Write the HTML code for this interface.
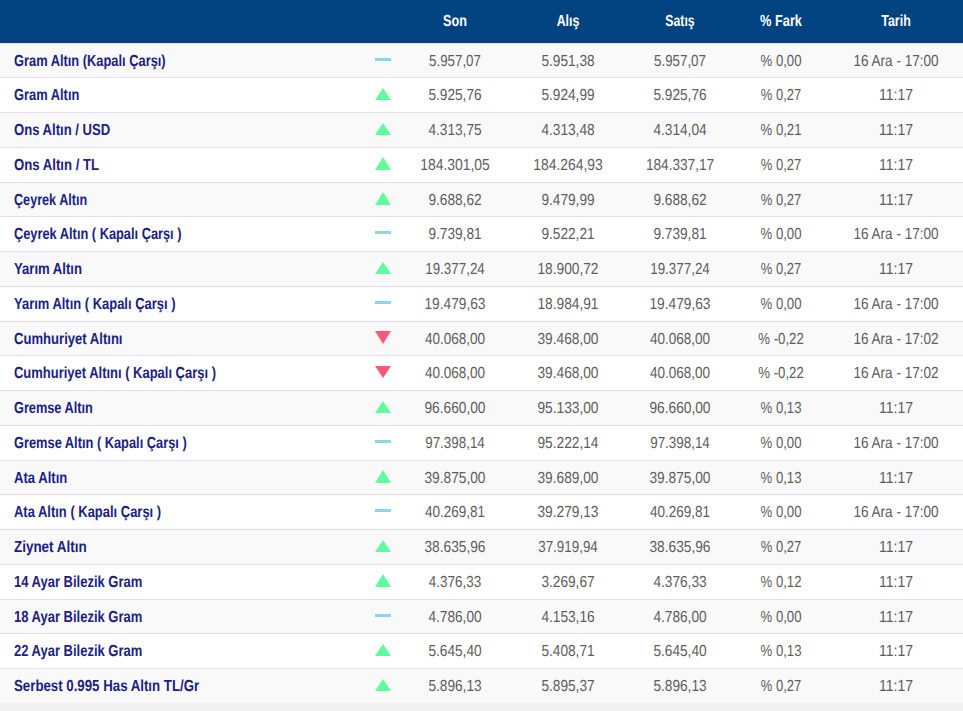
<!DOCTYPE html>
<html lang="tr"><head><meta charset="utf-8"><title>Altın Fiyatları</title>
<style>
html,body{margin:0;padding:0}
body{width:963px;height:711px;overflow:hidden;background:#f1f1f1;font-family:"Liberation Sans",sans-serif;position:relative}
.hd{position:absolute;left:0;top:0;width:963px;height:43px;background:#014280}
.r{position:absolute;left:0;width:963px}
.g{background:#f9f9f9}
.w{background:#fff}
.b{position:absolute;left:0;width:963px;height:1px;background:#dfe3e7}
.t{position:absolute;white-space:nowrap;text-rendering:geometricPrecision;line-height:20px;height:20px}
.n{left:14px;color:#1b2184;font-weight:bold;font-size:16px;transform-origin:0 15px}
.v{color:#5d5d5d;font-size:16px;transform-origin:50% 15px}
.h{color:#fff;font-weight:bold;font-size:16px;transform-origin:50% 15px}
.c{position:absolute;width:0;height:20px}
.c .t{left:0}
svg{position:absolute;display:block}
</style></head>
<body>
<div class="hd"></div>
<div class="b" style="top:43px"></div>
<div class="c" style="left:455.0px;top:12.00px"><span id="h_son" class="t h" style="transform:translateX(-50%) scale(0.7867,1)">Son</span></div>
<div class="c" style="left:568.0px;top:12.00px"><span id="h_alis" class="t h" style="transform:translateX(-50%) scale(0.7733,1)">Alış</span></div>
<div class="c" style="left:680.2px;top:12.00px"><span id="h_satis" class="t h" style="transform:translateX(-50%) scale(0.7667,1)">Satış</span></div>
<div class="c" style="left:781.3px;top:12.00px"><span id="h_fark" class="t h" style="transform:translateX(-50%) scale(0.8000,1)">% Fark</span></div>
<div class="c" style="left:895.9px;top:12.00px"><span id="h_tarih" class="t h" style="transform:translateX(-50%) scale(0.7769,1)">Tarih</span></div>
<div class="r g" style="top:44px;height:33px"></div>
<div class="b" style="top:77px"></div>
<span id="n0" class="t n" style="top:52.00px;transform:scale(0.8032,1)">Gram Altın (Kapalı Çarşı)</span>
<svg style="left:375px;top:58px" width="16" height="3" viewBox="0 0 16 3"><rect width="16" height="3" fill="#88d9e2"/></svg>
<div class="c" style="left:455.0px;top:52.00px"><span id="son0" class="t v" style="transform:translateX(-50%) scale(0.8323,1)">5.957,07</span></div>
<div class="c" style="left:568.0px;top:52.00px"><span id="alis0" class="t v" style="transform:translateX(-50%) scale(0.8548,1)">5.951,38</span></div>
<div class="c" style="left:680.2px;top:52.00px"><span id="satis0" class="t v" style="transform:translateX(-50%) scale(0.8323,1)">5.957,07</span></div>
<div class="c" style="left:781.3px;top:52.00px"><span id="fark0" class="t v" style="transform:translateX(-50%) scale(0.8200,1)">% 0,00</span></div>
<div class="c" style="left:895.9px;top:52.00px"><span id="tarih0" class="t v" style="transform:translateX(-50%) scale(0.8470,1)">16 Ara - 17:00</span></div>
<div class="r w" style="top:78px;height:34px"></div>
<div class="b" style="top:112px"></div>
<span id="n1" class="t n" style="top:86.00px;transform:scale(0.8049,1)">Gram Altın</span>
<svg style="left:375px;top:88px" width="16" height="12" viewBox="0 0 16 12"><path d="M8 0L16 12H0Z" fill="#5efc9f"/></svg>
<div class="c" style="left:455.0px;top:86.00px"><span id="son1" class="t v" style="transform:translateX(-50%) scale(0.8548,1)">5.925,76</span></div>
<div class="c" style="left:568.0px;top:86.00px"><span id="alis1" class="t v" style="transform:translateX(-50%) scale(0.8548,1)">5.924,99</span></div>
<div class="c" style="left:680.2px;top:86.00px"><span id="satis1" class="t v" style="transform:translateX(-50%) scale(0.8548,1)">5.925,76</span></div>
<div class="c" style="left:781.3px;top:86.00px"><span id="fark1" class="t v" style="transform:translateX(-50%) scale(0.8100,1)">% 0,27</span></div>
<div class="c" style="left:895.9px;top:86.00px"><span id="tarih1" class="t v" style="transform:translateX(-50%) scale(0.8737,1)">11:17</span></div>
<div class="r g" style="top:113px;height:34px"></div>
<div class="b" style="top:147px"></div>
<span id="n2" class="t n" style="top:121.00px;transform:scale(0.8178,1)">Ons Altın / USD</span>
<svg style="left:375px;top:123px" width="16" height="12" viewBox="0 0 16 12"><path d="M8 0L16 12H0Z" fill="#5efc9f"/></svg>
<div class="c" style="left:455.0px;top:121.00px"><span id="son2" class="t v" style="transform:translateX(-50%) scale(0.8548,1)">4.313,75</span></div>
<div class="c" style="left:568.0px;top:121.00px"><span id="alis2" class="t v" style="transform:translateX(-50%) scale(0.8548,1)">4.313,48</span></div>
<div class="c" style="left:680.2px;top:121.00px"><span id="satis2" class="t v" style="transform:translateX(-50%) scale(0.8548,1)">4.314,04</span></div>
<div class="c" style="left:781.3px;top:121.00px"><span id="fark2" class="t v" style="transform:translateX(-50%) scale(0.8200,1)">% 0,21</span></div>
<div class="c" style="left:895.9px;top:121.00px"><span id="tarih2" class="t v" style="transform:translateX(-50%) scale(0.8737,1)">11:17</span></div>
<div class="r w" style="top:148px;height:34px"></div>
<div class="b" style="top:182px"></div>
<span id="n3" class="t n" style="top:156.00px;transform:scale(0.8221,1)">Ons Altın / TL</span>
<svg style="left:375px;top:157px" width="16" height="13" viewBox="0 0 16 13"><path d="M8 0L16 13H0Z" fill="#5efc9f"/></svg>
<div class="c" style="left:455.0px;top:156.00px"><span id="son3" class="t v" style="transform:translateX(-50%) scale(0.8696,1)">184.301,05</span></div>
<div class="c" style="left:568.0px;top:156.00px"><span id="alis3" class="t v" style="transform:translateX(-50%) scale(0.8696,1)">184.264,93</span></div>
<div class="c" style="left:680.2px;top:156.00px"><span id="satis3" class="t v" style="transform:translateX(-50%) scale(0.8519,1)">184.337,17</span></div>
<div class="c" style="left:781.3px;top:156.00px"><span id="fark3" class="t v" style="transform:translateX(-50%) scale(0.8100,1)">% 0,27</span></div>
<div class="c" style="left:895.9px;top:156.00px"><span id="tarih3" class="t v" style="transform:translateX(-50%) scale(0.8737,1)">11:17</span></div>
<div class="r g" style="top:183px;height:33px"></div>
<div class="b" style="top:216px"></div>
<span id="n4" class="t n" style="top:191.00px;transform:scale(0.7892,1)">Çeyrek Altın</span>
<svg style="left:375px;top:192px" width="16" height="13" viewBox="0 0 16 13"><path d="M8 0L16 13H0Z" fill="#5efc9f"/></svg>
<div class="c" style="left:455.0px;top:191.00px"><span id="son4" class="t v" style="transform:translateX(-50%) scale(0.8548,1)">9.688,62</span></div>
<div class="c" style="left:568.0px;top:191.00px"><span id="alis4" class="t v" style="transform:translateX(-50%) scale(0.8548,1)">9.479,99</span></div>
<div class="c" style="left:680.2px;top:191.00px"><span id="satis4" class="t v" style="transform:translateX(-50%) scale(0.8548,1)">9.688,62</span></div>
<div class="c" style="left:781.3px;top:191.00px"><span id="fark4" class="t v" style="transform:translateX(-50%) scale(0.8100,1)">% 0,27</span></div>
<div class="c" style="left:895.9px;top:191.00px"><span id="tarih4" class="t v" style="transform:translateX(-50%) scale(0.8737,1)">11:17</span></div>
<div class="r w" style="top:217px;height:34px"></div>
<div class="b" style="top:251px"></div>
<span id="n5" class="t n" style="top:225.00px;transform:scale(0.8005,1)">Çeyrek Altın ( Kapalı Çarşı )</span>
<svg style="left:375px;top:231px" width="16" height="3" viewBox="0 0 16 3"><rect width="16" height="3" fill="#88d9e2"/></svg>
<div class="c" style="left:455.0px;top:225.00px"><span id="son5" class="t v" style="transform:translateX(-50%) scale(0.8548,1)">9.739,81</span></div>
<div class="c" style="left:568.0px;top:225.00px"><span id="alis5" class="t v" style="transform:translateX(-50%) scale(0.8548,1)">9.522,21</span></div>
<div class="c" style="left:680.2px;top:225.00px"><span id="satis5" class="t v" style="transform:translateX(-50%) scale(0.8548,1)">9.739,81</span></div>
<div class="c" style="left:781.3px;top:225.00px"><span id="fark5" class="t v" style="transform:translateX(-50%) scale(0.8200,1)">% 0,00</span></div>
<div class="c" style="left:895.9px;top:225.00px"><span id="tarih5" class="t v" style="transform:translateX(-50%) scale(0.8470,1)">16 Ara - 17:00</span></div>
<div class="r g" style="top:252px;height:34px"></div>
<div class="b" style="top:286px"></div>
<span id="n6" class="t n" style="top:260.00px;transform:scale(0.8193,1)">Yarım Altın</span>
<svg style="left:375px;top:262px" width="16" height="12" viewBox="0 0 16 12"><path d="M8 0L16 12H0Z" fill="#5efc9f"/></svg>
<div class="c" style="left:455.0px;top:260.00px"><span id="son6" class="t v" style="transform:translateX(-50%) scale(0.8373,1)">19.377,24</span></div>
<div class="c" style="left:568.0px;top:260.00px"><span id="alis6" class="t v" style="transform:translateX(-50%) scale(0.8570,1)">18.900,72</span></div>
<div class="c" style="left:680.2px;top:260.00px"><span id="satis6" class="t v" style="transform:translateX(-50%) scale(0.8373,1)">19.377,24</span></div>
<div class="c" style="left:781.3px;top:260.00px"><span id="fark6" class="t v" style="transform:translateX(-50%) scale(0.8100,1)">% 0,27</span></div>
<div class="c" style="left:895.9px;top:260.00px"><span id="tarih6" class="t v" style="transform:translateX(-50%) scale(0.8737,1)">11:17</span></div>
<div class="r w" style="top:287px;height:34px"></div>
<div class="b" style="top:321px"></div>
<span id="n7" class="t n" style="top:295.00px;transform:scale(0.8095,1)">Yarım Altın ( Kapalı Çarşı )</span>
<svg style="left:375px;top:301px" width="16" height="3" viewBox="0 0 16 3"><rect width="16" height="3" fill="#88d9e2"/></svg>
<div class="c" style="left:455.0px;top:295.00px"><span id="son7" class="t v" style="transform:translateX(-50%) scale(0.8570,1)">19.479,63</span></div>
<div class="c" style="left:568.0px;top:295.00px"><span id="alis7" class="t v" style="transform:translateX(-50%) scale(0.8570,1)">18.984,91</span></div>
<div class="c" style="left:680.2px;top:295.00px"><span id="satis7" class="t v" style="transform:translateX(-50%) scale(0.8570,1)">19.479,63</span></div>
<div class="c" style="left:781.3px;top:295.00px"><span id="fark7" class="t v" style="transform:translateX(-50%) scale(0.8200,1)">% 0,00</span></div>
<div class="c" style="left:895.9px;top:295.00px"><span id="tarih7" class="t v" style="transform:translateX(-50%) scale(0.8470,1)">16 Ara - 17:00</span></div>
<div class="r g" style="top:322px;height:33px"></div>
<div class="b" style="top:355px"></div>
<span id="n8" class="t n" style="top:330.00px;transform:scale(0.8174,1)">Cumhuriyet Altını</span>
<svg style="left:375px;top:331px" width="16" height="13" viewBox="0 0 16 13"><path d="M0 0H16L8 13Z" fill="#ff5777"/></svg>
<div class="c" style="left:455.0px;top:330.00px"><span id="son8" class="t v" style="transform:translateX(-50%) scale(0.8451,1)">40.068,00</span></div>
<div class="c" style="left:568.0px;top:330.00px"><span id="alis8" class="t v" style="transform:translateX(-50%) scale(0.8570,1)">39.468,00</span></div>
<div class="c" style="left:680.2px;top:330.00px"><span id="satis8" class="t v" style="transform:translateX(-50%) scale(0.8451,1)">40.068,00</span></div>
<div class="c" style="left:781.3px;top:330.00px"><span id="fark8" class="t v" style="transform:translateX(-50%) scale(0.8236,1)">% -0,22</span></div>
<div class="c" style="left:895.9px;top:330.00px"><span id="tarih8" class="t v" style="transform:translateX(-50%) scale(0.8470,1)">16 Ara - 17:02</span></div>
<div class="r w" style="top:356px;height:34px"></div>
<div class="b" style="top:390px"></div>
<span id="n9" class="t n" style="top:364.00px;transform:scale(0.8104,1)">Cumhuriyet Altını ( Kapalı Çarşı )</span>
<svg style="left:375px;top:366px" width="16" height="12" viewBox="0 0 16 12"><path d="M0 0H16L8 12Z" fill="#ff5777"/></svg>
<div class="c" style="left:455.0px;top:364.00px"><span id="son9" class="t v" style="transform:translateX(-50%) scale(0.8451,1)">40.068,00</span></div>
<div class="c" style="left:568.0px;top:364.00px"><span id="alis9" class="t v" style="transform:translateX(-50%) scale(0.8570,1)">39.468,00</span></div>
<div class="c" style="left:680.2px;top:364.00px"><span id="satis9" class="t v" style="transform:translateX(-50%) scale(0.8451,1)">40.068,00</span></div>
<div class="c" style="left:781.3px;top:364.00px"><span id="fark9" class="t v" style="transform:translateX(-50%) scale(0.8236,1)">% -0,22</span></div>
<div class="c" style="left:895.9px;top:364.00px"><span id="tarih9" class="t v" style="transform:translateX(-50%) scale(0.8470,1)">16 Ara - 17:02</span></div>
<div class="r g" style="top:391px;height:34px"></div>
<div class="b" style="top:425px"></div>
<span id="n10" class="t n" style="top:399.00px;transform:scale(0.7960,1)">Gremse Altın</span>
<svg style="left:375px;top:401px" width="16" height="12" viewBox="0 0 16 12"><path d="M8 0L16 12H0Z" fill="#5efc9f"/></svg>
<div class="c" style="left:455.0px;top:399.00px"><span id="son10" class="t v" style="transform:translateX(-50%) scale(0.8570,1)">96.660,00</span></div>
<div class="c" style="left:568.0px;top:399.00px"><span id="alis10" class="t v" style="transform:translateX(-50%) scale(0.8570,1)">95.133,00</span></div>
<div class="c" style="left:680.2px;top:399.00px"><span id="satis10" class="t v" style="transform:translateX(-50%) scale(0.8570,1)">96.660,00</span></div>
<div class="c" style="left:781.3px;top:399.00px"><span id="fark10" class="t v" style="transform:translateX(-50%) scale(0.8200,1)">% 0,13</span></div>
<div class="c" style="left:895.9px;top:399.00px"><span id="tarih10" class="t v" style="transform:translateX(-50%) scale(0.8737,1)">11:17</span></div>
<div class="r w" style="top:426px;height:34px"></div>
<div class="b" style="top:460px"></div>
<span id="n11" class="t n" style="top:434.00px;transform:scale(0.8014,1)">Gremse Altın ( Kapalı Çarşı )</span>
<svg style="left:375px;top:440px" width="16" height="3" viewBox="0 0 16 3"><rect width="16" height="3" fill="#88d9e2"/></svg>
<div class="c" style="left:455.0px;top:434.00px"><span id="son11" class="t v" style="transform:translateX(-50%) scale(0.8373,1)">97.398,14</span></div>
<div class="c" style="left:568.0px;top:434.00px"><span id="alis11" class="t v" style="transform:translateX(-50%) scale(0.8570,1)">95.222,14</span></div>
<div class="c" style="left:680.2px;top:434.00px"><span id="satis11" class="t v" style="transform:translateX(-50%) scale(0.8373,1)">97.398,14</span></div>
<div class="c" style="left:781.3px;top:434.00px"><span id="fark11" class="t v" style="transform:translateX(-50%) scale(0.8200,1)">% 0,00</span></div>
<div class="c" style="left:895.9px;top:434.00px"><span id="tarih11" class="t v" style="transform:translateX(-50%) scale(0.8470,1)">16 Ara - 17:00</span></div>
<div class="r g" style="top:461px;height:33px"></div>
<div class="b" style="top:494px"></div>
<span id="n12" class="t n" style="top:469.00px;transform:scale(0.8169,1)">Ata Altın</span>
<svg style="left:375px;top:470px" width="16" height="13" viewBox="0 0 16 13"><path d="M8 0L16 13H0Z" fill="#5efc9f"/></svg>
<div class="c" style="left:455.0px;top:469.00px"><span id="son12" class="t v" style="transform:translateX(-50%) scale(0.8570,1)">39.875,00</span></div>
<div class="c" style="left:568.0px;top:469.00px"><span id="alis12" class="t v" style="transform:translateX(-50%) scale(0.8570,1)">39.689,00</span></div>
<div class="c" style="left:680.2px;top:469.00px"><span id="satis12" class="t v" style="transform:translateX(-50%) scale(0.8570,1)">39.875,00</span></div>
<div class="c" style="left:781.3px;top:469.00px"><span id="fark12" class="t v" style="transform:translateX(-50%) scale(0.8200,1)">% 0,13</span></div>
<div class="c" style="left:895.9px;top:469.00px"><span id="tarih12" class="t v" style="transform:translateX(-50%) scale(0.8737,1)">11:17</span></div>
<div class="r w" style="top:495px;height:34px"></div>
<div class="b" style="top:529px"></div>
<span id="n13" class="t n" style="top:503.00px;transform:scale(0.8099,1)">Ata Altın ( Kapalı Çarşı )</span>
<svg style="left:375px;top:509px" width="16" height="3" viewBox="0 0 16 3"><rect width="16" height="3" fill="#88d9e2"/></svg>
<div class="c" style="left:455.0px;top:503.00px"><span id="son13" class="t v" style="transform:translateX(-50%) scale(0.8451,1)">40.269,81</span></div>
<div class="c" style="left:568.0px;top:503.00px"><span id="alis13" class="t v" style="transform:translateX(-50%) scale(0.8570,1)">39.279,13</span></div>
<div class="c" style="left:680.2px;top:503.00px"><span id="satis13" class="t v" style="transform:translateX(-50%) scale(0.8451,1)">40.269,81</span></div>
<div class="c" style="left:781.3px;top:503.00px"><span id="fark13" class="t v" style="transform:translateX(-50%) scale(0.8200,1)">% 0,00</span></div>
<div class="c" style="left:895.9px;top:503.00px"><span id="tarih13" class="t v" style="transform:translateX(-50%) scale(0.8470,1)">16 Ara - 17:00</span></div>
<div class="r g" style="top:530px;height:34px"></div>
<div class="b" style="top:564px"></div>
<span id="n14" class="t n" style="top:538.00px;transform:scale(0.8395,1)">Ziynet Altın</span>
<svg style="left:375px;top:540px" width="16" height="12" viewBox="0 0 16 12"><path d="M8 0L16 12H0Z" fill="#5efc9f"/></svg>
<div class="c" style="left:455.0px;top:538.00px"><span id="son14" class="t v" style="transform:translateX(-50%) scale(0.8570,1)">38.635,96</span></div>
<div class="c" style="left:568.0px;top:538.00px"><span id="alis14" class="t v" style="transform:translateX(-50%) scale(0.8373,1)">37.919,94</span></div>
<div class="c" style="left:680.2px;top:538.00px"><span id="satis14" class="t v" style="transform:translateX(-50%) scale(0.8570,1)">38.635,96</span></div>
<div class="c" style="left:781.3px;top:538.00px"><span id="fark14" class="t v" style="transform:translateX(-50%) scale(0.8100,1)">% 0,27</span></div>
<div class="c" style="left:895.9px;top:538.00px"><span id="tarih14" class="t v" style="transform:translateX(-50%) scale(0.8737,1)">11:17</span></div>
<div class="r w" style="top:565px;height:34px"></div>
<div class="b" style="top:599px"></div>
<span id="n15" class="t n" style="top:573.00px;transform:scale(0.8120,1)">14 Ayar Bilezik Gram</span>
<svg style="left:375px;top:574px" width="16" height="13" viewBox="0 0 16 13"><path d="M8 0L16 13H0Z" fill="#5efc9f"/></svg>
<div class="c" style="left:455.0px;top:573.00px"><span id="son15" class="t v" style="transform:translateX(-50%) scale(0.8413,1)">4.376,33</span></div>
<div class="c" style="left:568.0px;top:573.00px"><span id="alis15" class="t v" style="transform:translateX(-50%) scale(0.8548,1)">3.269,67</span></div>
<div class="c" style="left:680.2px;top:573.00px"><span id="satis15" class="t v" style="transform:translateX(-50%) scale(0.8548,1)">4.376,33</span></div>
<div class="c" style="left:781.3px;top:573.00px"><span id="fark15" class="t v" style="transform:translateX(-50%) scale(0.8200,1)">% 0,12</span></div>
<div class="c" style="left:895.9px;top:573.00px"><span id="tarih15" class="t v" style="transform:translateX(-50%) scale(0.8737,1)">11:17</span></div>
<div class="r g" style="top:600px;height:33px"></div>
<div class="b" style="top:633px"></div>
<span id="n16" class="t n" style="top:608.00px;transform:scale(0.8120,1)">18 Ayar Bilezik Gram</span>
<svg style="left:375px;top:614px" width="16" height="3" viewBox="0 0 16 3"><rect width="16" height="3" fill="#88d9e2"/></svg>
<div class="c" style="left:455.0px;top:608.00px"><span id="son16" class="t v" style="transform:translateX(-50%) scale(0.8548,1)">4.786,00</span></div>
<div class="c" style="left:568.0px;top:608.00px"><span id="alis16" class="t v" style="transform:translateX(-50%) scale(0.8548,1)">4.153,16</span></div>
<div class="c" style="left:680.2px;top:608.00px"><span id="satis16" class="t v" style="transform:translateX(-50%) scale(0.8548,1)">4.786,00</span></div>
<div class="c" style="left:781.3px;top:608.00px"><span id="fark16" class="t v" style="transform:translateX(-50%) scale(0.8200,1)">% 0,00</span></div>
<div class="c" style="left:895.9px;top:608.00px"><span id="tarih16" class="t v" style="transform:translateX(-50%) scale(0.8737,1)">11:17</span></div>
<div class="r w" style="top:634px;height:34px"></div>
<div class="b" style="top:668px"></div>
<span id="n17" class="t n" style="top:642.00px;transform:scale(0.8120,1)">22 Ayar Bilezik Gram</span>
<svg style="left:375px;top:644px" width="16" height="12" viewBox="0 0 16 12"><path d="M8 0L16 12H0Z" fill="#5efc9f"/></svg>
<div class="c" style="left:455.0px;top:642.00px"><span id="son17" class="t v" style="transform:translateX(-50%) scale(0.8548,1)">5.645,40</span></div>
<div class="c" style="left:568.0px;top:642.00px"><span id="alis17" class="t v" style="transform:translateX(-50%) scale(0.8548,1)">5.408,71</span></div>
<div class="c" style="left:680.2px;top:642.00px"><span id="satis17" class="t v" style="transform:translateX(-50%) scale(0.8548,1)">5.645,40</span></div>
<div class="c" style="left:781.3px;top:642.00px"><span id="fark17" class="t v" style="transform:translateX(-50%) scale(0.8200,1)">% 0,13</span></div>
<div class="c" style="left:895.9px;top:642.00px"><span id="tarih17" class="t v" style="transform:translateX(-50%) scale(0.8737,1)">11:17</span></div>
<div class="r g" style="top:669px;height:34px"></div>
<span id="n18" class="t n" style="top:677.00px;transform:scale(0.8286,1)">Serbest 0.995 Has Altın TL/Gr</span>
<svg style="left:375px;top:679px" width="16" height="12" viewBox="0 0 16 12"><path d="M8 0L16 12H0Z" fill="#5efc9f"/></svg>
<div class="c" style="left:455.0px;top:677.00px"><span id="son18" class="t v" style="transform:translateX(-50%) scale(0.8548,1)">5.896,13</span></div>
<div class="c" style="left:568.0px;top:677.00px"><span id="alis18" class="t v" style="transform:translateX(-50%) scale(0.8548,1)">5.895,37</span></div>
<div class="c" style="left:680.2px;top:677.00px"><span id="satis18" class="t v" style="transform:translateX(-50%) scale(0.8548,1)">5.896,13</span></div>
<div class="c" style="left:781.3px;top:677.00px"><span id="fark18" class="t v" style="transform:translateX(-50%) scale(0.8100,1)">% 0,27</span></div>
<div class="c" style="left:895.9px;top:677.00px"><span id="tarih18" class="t v" style="transform:translateX(-50%) scale(0.8737,1)">11:17</span></div>
</body></html>
